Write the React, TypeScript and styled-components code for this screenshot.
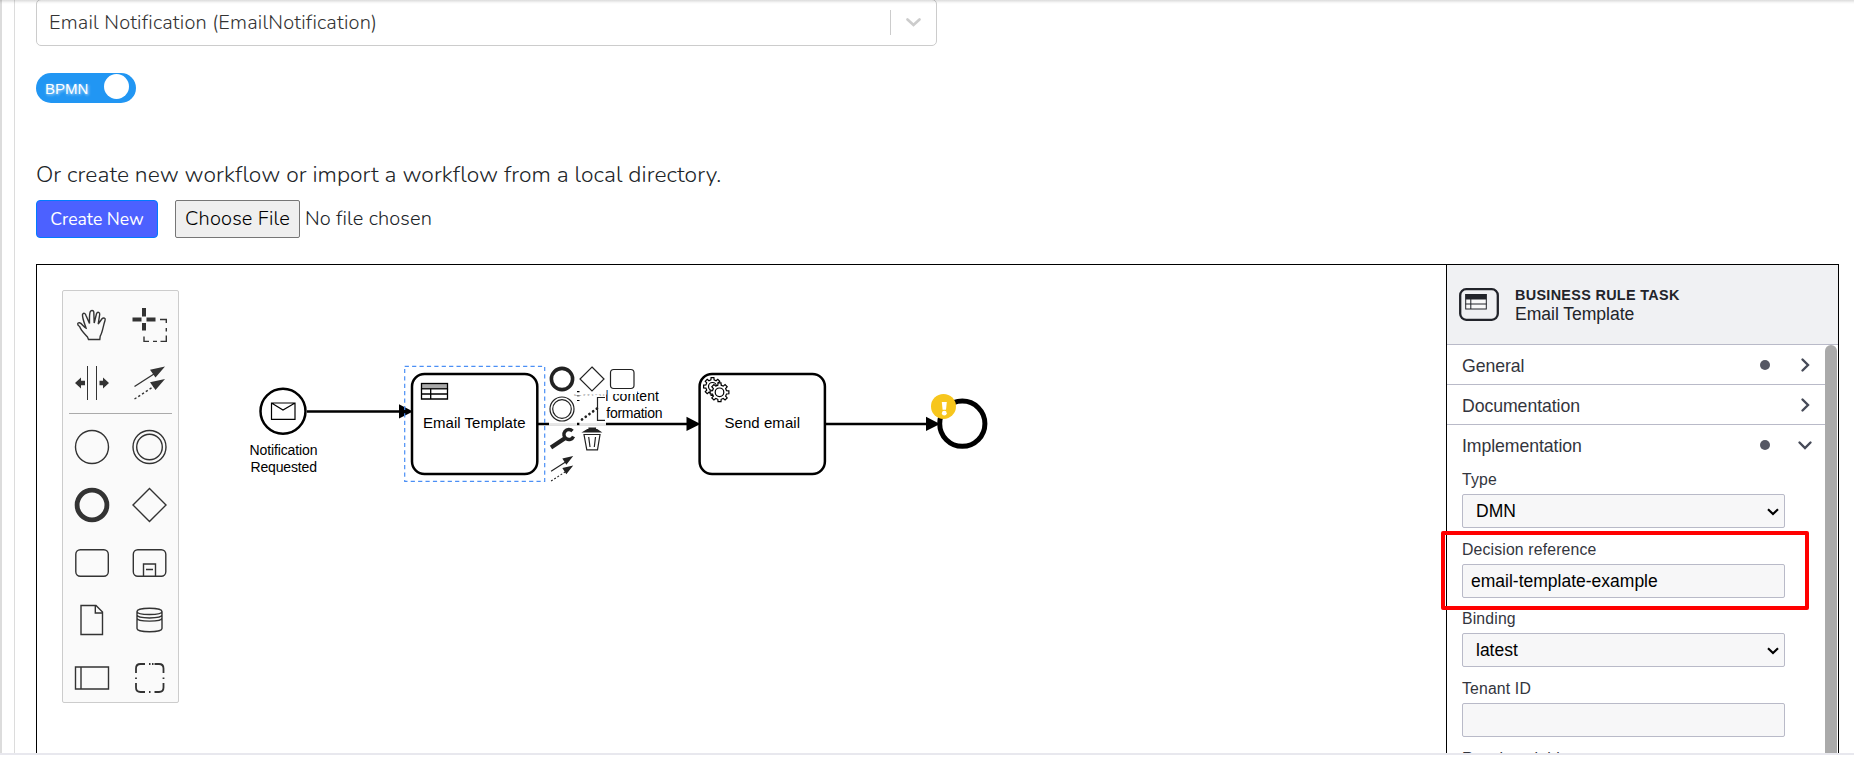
import React from "react";
import styled, { createGlobalStyle } from "styled-components";

const GlobalStyle = createGlobalStyle`
  *, *::before, *::after { box-sizing: border-box; }
  html, body { margin: 0; padding: 0; background: #fff; overflow: hidden; }
`;

const rounded = `"Nunito", "Open Sans", "Noto Sans", sans-serif`;
const plain = `"Liberation Sans", Arial, sans-serif`;

const Page = styled.div`
  position: relative;
  display: flex;
  flex-direction: column;
  width: 1854px;
  height: 759px;
  overflow: hidden;
  background: #fff;
  font-family: ${rounded};
`;

const TopShadow = styled.div`
  position: absolute;
  inset: 0 0 auto 0;
  height: 4px;
  background: linear-gradient(rgba(0, 0, 0, 0.14), rgba(0, 0, 0, 0.04) 60%, rgba(0, 0, 0, 0));
`;

const Frame = styled.div`
  display: flex;
  height: 753px;
  overflow: hidden;
`;

const OuterRail = styled.div`
  flex: none;
  width: 15px;
  border-left: 2px solid #dcdcdc;
  border-right: 1px solid #dcdcdc;
`;

const Content = styled.main`
  display: flex;
  flex-direction: column;
  align-items: flex-start;
  padding-left: 21px;
`;

const FooterLine = styled.div`
  flex: none;
  height: 2px;
  background: #e8e8ee;
`;

const WorkflowSelect = styled.div`
  display: flex;
  align-items: center;
  flex: none;
  width: 901px;
  height: 47px;
  margin-top: -1px;
  padding-left: 12px;
  border: 1px solid #ccc;
  border-radius: 5px;
  color: #333;
`;

const SelectValue = styled.span`
  flex: 1;
  font-size: 20px;
  font-weight: 300;
  line-height: 24px;
  letter-spacing: 0.19px;
  white-space: nowrap;
`;

const SelectDivider = styled.span`
  width: 1px;
  height: 25px;
  margin-right: 14px;
  background: #ccc;
`;

const SelectArrow = styled.svg`
  width: 17px;
  height: 11px;
  margin-right: 14px;
`;

const Toggle = styled.div`
  display: flex;
  align-items: flex-start;
  justify-content: space-between;
  flex: none;
  width: 100px;
  height: 30px;
  margin-top: 27px;
  padding: 1px 7px 0 9px;
  border-radius: 15px;
  background: #2196f3;
`;

const ToggleLabel = styled.span`
  color: #fff;
  font-family: ${plain};
  font-size: 15px;
  line-height: 30px;
  text-shadow: 1px 1px 3px rgba(255, 255, 255, 0.7);
`;

const ToggleKnob = styled.span`
  width: 25px;
  height: 25px;
  border-radius: 50%;
  background: #fff;
`;

const Hint = styled.p`
  margin: 57px 0 0;
  color: #212529;
  font-size: 22.8px;
  font-weight: 300;
  line-height: 30px;
  letter-spacing: 0.07px;
  white-space: nowrap;
`;

const Actions = styled.div`
  display: flex;
  align-items: center;
  height: 38px;
  margin-top: 10px;
  font-size: 18px;
`;

const CreateButton = styled.button`
  width: 122px;
  height: 38px;
  padding: 0;
  border: 1px solid #007bff;
  border-radius: 4px;
  background: #4c61ff;
  color: #fff;
  font: 400 17.6px/34px ${rounded};
  white-space: nowrap;
`;

const FileButton = styled.button`
  width: 125px;
  height: 38px;
  margin: 0 5px 0 17px;
  padding: 0;
  border: 1px solid #767676;
  border-radius: 2px;
  background: #efefef;
  color: #000;
  font: 300 20px/34px ${rounded};
  letter-spacing: 0.15px;
  white-space: nowrap;
`;

const FileName = styled.span`
  color: #212529;
  font-size: 20px;
  font-weight: 300;
  line-height: 36px;
  letter-spacing: 0.12px;
  white-space: nowrap;
`;

const Modeler = styled.section`
  position: relative;
  display: flex;
  flex: none;
  width: 1803px;
  height: 600px;
  margin-top: 26px;
  border: 1px solid #000;
`;

const Canvas = styled.div`
  position: relative;
  width: 1409px;
  height: 488px;
`;

const Diagram = styled.svg`
  display: block;
  width: 1409px;
  height: 488px;
  font-family: ${plain};
`;

const Palette = styled.div`
  position: absolute;
  left: 25px;
  top: 25px;
  width: 117px;
  height: 413px;
  border: 1px solid #ccc;
  border-radius: 2px;
  background: #fafafa;
`;

const PaletteGroup = styled.div<{ $first?: boolean }>`
  display: grid;
  grid-template-columns: 57.5px 57.5px;
  grid-auto-rows: 57.7px;
  place-items: center;
  padding-top: ${(p) => (p.$first ? 5 : 0)}px;
`;

const PaletteDivider = styled.hr`
  height: 1px;
  margin: 2px 6px 4px;
  border: 0;
  background: #aaa;
`;

const PaletteIcon = styled.svg`
  width: 38px;
  height: 38px;
  fill: none;
  stroke: #333;
  stroke-width: 1.4;
`;

const Properties = styled.aside`
  display: flex;
  flex-direction: column;
  width: 392px;
  height: 488px;
  overflow: hidden;
  border-left: 1px solid #000;
  background: #fff;
  font-family: ${plain};
`;

const PanelHeader = styled.header`
  display: flex;
  flex: none;
  height: 80px;
  padding: 23px 0 0 12px;
  gap: 16px;
  border-bottom: 1px solid #b9bac8;
  background: #f0f1f3;
  color: #22242a;
`;

const PanelIcon = styled.svg`
  width: 40px;
  height: 33px;
`;

const PanelKind = styled.div`
  margin-top: -3px;
  font-size: 14.4px;
  font-weight: 700;
  line-height: 20px;
  letter-spacing: 0.32px;
  white-space: nowrap;
`;

const PanelName = styled.div`
  font-size: 17.6px;
  line-height: 19px;
  letter-spacing: -0.05px;
`;

const PanelBody = styled.div`
  display: flex;
  flex: 1;
  min-height: 0;
  padding-right: 1px;
`;

const Groups = styled.div`
  flex: 1;
  overflow: hidden;
`;

const Scrollbar = styled.div`
  width: 12px;
  height: 420px;
  border-radius: 6px 6px 0 0;
  background: #aaa;
`;

const GroupRow = styled.div<{ $open?: boolean }>`
  display: flex;
  align-items: center;
  height: 40px;
  padding: 0 12px 0 15px;
  border-bottom: 1px solid ${(p) => (p.$open ? "transparent" : "#b9bac8")};
  color: #33353d;
  font-size: 17.7px;
  letter-spacing: -0.08px;
`;

const GroupTitle = styled.span`
  flex: 1;
  line-height: 38px;
  padding-top: 2px;
`;

const Dot = styled.span`
  width: 10px;
  height: 10px;
  margin-right: 27px;
  border-radius: 50%;
  background: #555763;
`;

const Chevron = styled.svg<{ $down?: boolean }>`
  width: 16px;
  height: 16px;
  fill: none;
  stroke: #464a58;
  stroke-width: 2.4;
  stroke-linecap: round;
  transform: rotate(${(p) => (p.$down ? 90 : 0)}deg);
`;

const Fields = styled.div`
  display: flex;
  flex-direction: column;
  gap: 14.7px;
  padding: 8px 40px 0 15px;
`;

const Field = styled.div`
  display: flex;
  flex-direction: column;
`;

const Label = styled.label`
  height: 21px;
  color: #33353d;
  font-size: 15.8px;
  line-height: 14px;
  white-space: nowrap;
  letter-spacing: 0.15px;
`;

const Box = styled.div<{ $select?: boolean }>`
  display: flex;
  align-items: center;
  justify-content: space-between;
  height: 34px;
  padding: 0 5px 0 ${(p) => (p.$select ? 13 : 8)}px;
  border: 1px solid #b9bac8;
  border-radius: 2px;
  background: #f7f7f8;
  color: #000;
  font-size: 17.5px;
  line-height: 32px;
`;

const Caret = styled.svg`
  width: 12px;
  height: 8px;
  margin-top: 2px;
  fill: none;
  stroke: #000;
  stroke-width: 2.1;
`;

const Highlight = styled.div`
  position: absolute;
  left: 1404px;
  top: 266px;
  width: 368px;
  height: 79px;
  border: 4px solid #ff0000;
  border-radius: 2px;
`;

const gearPath = (cx: number, cy: number, inner: number, outer: number, teeth = 8) => {
  const pts: string[] = [];
  const step = (Math.PI * 2) / teeth;
  for (let i = 0; i < teeth; i++) {
    const a = i * step - Math.PI / 2;
    [
      [inner, -0.3],
      [outer, -0.2],
      [outer, 0.2],
      [inner, 0.3],
    ].forEach(([r, f]) => {
      pts.push(`${(cx + r * Math.cos(a + f * step)).toFixed(2)} ${(cy + r * Math.sin(a + f * step)).toFixed(2)}`);
    });
  }
  return `M${pts.join("L")}Z`;
};

const tools = [
  <path d="M15.5 33.5L14.500 31C11 27 8 24.500 6.600 20.500C4.200 19 4 16.500 6.500 16.800C9 17.200 10.500 21 13 22C11.500 17.500 9.200 12 9.500 8.500C10.500 6.200 12.500 7.500 13 9.500L16.500 17.500C16.500 13 16.200 8.500 17.200 5.800C18 4 20.400 4.200 20.800 6L21.200 17L23.500 7.800C24.500 5.200 27 6.200 26.700 8.500L25.200 18L29 12.800C30.500 11.200 33 12.200 32 14.500C30 20.500 29.500 26.500 27.200 30.200L26.800 33.500Z" />,
  <>
    <path d="M2.500 13.500H11.500M16.500 13.500H25.500M14 2V10.500M14 17V24.500" strokeWidth="4" />
    <path d="M30 13.500H36.300V17M36.300 22V25.500M36.300 29.500V35.400H30.500M27 35.400H23M19 35.400H14V30.500" />
  </>,
  <>
    <path d="M14.500 2V36M23.500 2V36" strokeWidth="1" />
    <path d="M2 19L8 13.500V16.800H12V21.200H8V24.500ZM36 19L30 13.500V16.800H26.500V21.200H30V24.500Z" fill="#333" stroke="none" />
  </>,
  <>
    <path d="M4.500 22.500L25.500 9" />
    <path d="M4.500 35L24.500 22" strokeDasharray="2.300 2.200" />
    <path d="M35 2.500L20 5.800L25.500 13.500ZM35 15L20 18.300L25.500 26Z" fill="#333" stroke="none" />
  </>,
];

const shapes = [
  <circle cx="19" cy="19" r="16.500" />,
  <>
    <circle cx="19.500" cy="19" r="16.500" />
    <circle cx="19.500" cy="19" r="12.800" />
  </>,
  <circle cx="19" cy="19" r="14.900" strokeWidth="4.800" />,
  <path d="M19.500 2.500L36 19L19.500 35.500L3 19Z" />,
  <rect x="2.800" y="5.800" width="32.500" height="26.500" rx="4.500" />,
  <>
    <rect x="3.300" y="5.800" width="32.500" height="26.500" rx="4.500" />
    <path d="M13.500 32V20H25.500V32M16 25.500H23" />
  </>,
  <path d="M8 4.500H23L29.500 11V33.500H8ZM22.300 4.500V12H29.500" />,
  <path d="M7 10.500C7 6.200 32 6.200 32 10.500V27.500C32 31.800 7 31.800 7 27.500ZM7 10.500C7 14.500 32 14.500 32 10.500M7 13.800C7 18 32 18 32 13.800M7 17C7 21.200 32 21.200 32 17" />,
  <path d="M2.500 8H35.500V30H2.500ZM8 8V30" />,
  <>
    <path d="M6 14V9.500Q6 5 10.500 5H15M24.500 5H29Q33.500 5 33.500 9.500V14M33.500 24V28.500Q33.500 33 29 33H24.500M15 33H10.500Q6 33 6 28.500V24" strokeWidth="1.800" />
    <path d="M19 5H20.500M22 5H23.500M19 33H20.500M33.500 18.500V20M6 18.500V20" strokeWidth="1.800" />
  </>,
];

const Process = () => (
  <Diagram viewBox="37 265 1409 488">
    <g fill="none" stroke="#000" strokeWidth="2.500">
      <circle cx="283" cy="411.300" r="22.500" />
      <path d="M271.500 403H295V419.300H271.500ZM271.500 403L283 410L295 403" strokeWidth="1.200" />
      <path d="M307 411.400H405M538 423.900H692M826 423.900H932" />
      <rect x="412" y="374" width="125.300" height="100" rx="12.500" fill="#fff" />
      <rect x="699.600" y="374" width="125.300" height="100" rx="12.500" fill="#fff" />
      <circle cx="962.300" cy="423.700" r="22.600" strokeWidth="5" />
      <g strokeWidth="1.300">
        <rect x="421.500" y="383.500" width="26" height="5.300" fill="#aaa" />
        <path d="M421.500 388.800V399H447.500V388.800M421.500 394H447.500M430.700 388.800V399" />
      </g>
      <g strokeWidth="1.200" fill="#fff">
        <path d={gearPath(712.5, 386.5, 6.8, 9)} />
        <circle cx="712.500" cy="386.500" r="4" />
        <path d={gearPath(719.5, 392.3, 7.2, 9.5)} />
        <circle cx="719.500" cy="392.300" r="4.300" />
      </g>
    </g>
    <path d="M413 411.400L399 404.200V418.600ZM700.500 423.900L686.500 416.700V431.100ZM940 423.900L926 416.700V431.100Z" />
    <rect x="404.700" y="366.300" width="140" height="115" fill="none" stroke="#4b8ff5" strokeWidth="1.200" strokeDasharray="4.200 3.200" />
    <g fontSize="15" fill="#000">
      <text x="423" y="428" textLength="102.500">Email Template</text>
      <text x="724.500" y="428" textLength="75.500">Send email</text>
    </g>
    <g fontSize="14" fill="#000">
      <text x="249.500" y="455" textLength="68">Notification</text>
      <text x="250.500" y="472" textLength="66.500">Requested</text>
      <text x="573" y="401" textLength="86">Email content</text>
      <text x="596" y="418" textLength="66.500">information</text>
    </g>
    <path d="M549 366H577V394.500H549ZM579.500 366H606.500V394.500H579.500ZM609.500 366H637V394H609.500ZM549 395.500H577V425.500H549ZM579.500 395.500H606V425.500H579.500ZM549 426H577V482H549ZM579.500 426H606.500V454H579.500Z" fill="#fff" />
    <path d="M549 394H606V396H549Z" fill="#fff" opacity="0.5" />
    <path d="M549 424H577M579.500 424H606" stroke="#ccc" />
    <g fill="none" stroke="#222" strokeWidth="1.200">
      <circle cx="562" cy="379" r="10.600" strokeWidth="3.600" />
      <path d="M592 367L604 379L592 391L580 379Z" />
      <rect x="610.500" y="369.500" width="23.500" height="19" rx="3.200" />
      <circle cx="562" cy="409" r="12" />
      <circle cx="562" cy="409" r="9.300" />
      <path d="M605 397.500H597.500V420.300H605" />
      <path d="M582 419.500L597 408.500" strokeWidth="2.700" strokeLinecap="round" strokeDasharray="0.100 4.500" />
      <path d="M551 447.500L564.500 438.500" strokeWidth="4.200" />
      <path d="M572.500 431A5 5 0 1 0 573.500 436.500" strokeWidth="3.400" />
      <path d="M584 434.500H600L597.500 449.800H586.800ZM588.700 437L590 447M595.500 437L594.300 447" />
      <path d="M583.500 432L587.500 429.500H589V428H595.500V429.500H597L600.500 432Z" fill="#222" />
      <g transform="translate(548.200 447.700) scale(.725)" strokeWidth="1.500">
        <path d="M4 32.500L25 19" />
        <path d="M4 46L24 33" strokeDasharray="2.600 2.600" />
        <path d="M34.500 11.500L19.500 15L25 23.500ZM34.500 24.500L19.500 28L25 36.500Z" fill="#222" stroke="none" />
      </g>
    </g>
    <circle cx="943.500" cy="406.400" r="12.500" fill="#f7c61d" />
    <path d="M941.800 402H946.800L946 409.800H942.600Z" fill="#fff" />
    <circle cx="944.300" cy="413.200" r="2.400" fill="#fff" />
  </Diagram>
);

const Arrow = ({ down }: { down?: boolean }) => (
  <Chevron viewBox="0 0 16 16" $down={down}>
    <path d="M5.500 2.500L11 8L5.500 13.500" />
  </Chevron>
);

const fields = [
  { label: "Type", value: "DMN", select: true },
  { label: "Decision reference", value: "email-template-example" },
  { label: "Binding", value: "latest", select: true },
  { label: "Tenant ID", value: "" },
  { label: "Result variable", value: "" },
];

export default function App() {
  return (
    <Page>
      <GlobalStyle />
      <Frame>
        <OuterRail />
        <Content>
          <WorkflowSelect>
            <SelectValue>Email Notification (EmailNotification)</SelectValue>
            <SelectDivider />
            <SelectArrow viewBox="0 0 17 11">
              <path d="M2.500 2.500L8.500 8L14.500 2.500" fill="none" stroke="#ccc" strokeWidth="2.700" strokeLinecap="round" />
            </SelectArrow>
          </WorkflowSelect>
          <Toggle>
            <ToggleLabel>BPMN</ToggleLabel>
            <ToggleKnob />
          </Toggle>
          <Hint>Or create new workflow or import a workflow from a local directory.</Hint>
          <Actions>
            <CreateButton>Create New</CreateButton>
            <FileButton>Choose File</FileButton>
            <FileName>No file chosen</FileName>
          </Actions>
          <Modeler>
            <Canvas>
              <Process />
              <Palette>
                <PaletteGroup $first>
                  {tools.map((icon, i) => (
                    <PaletteIcon key={i} viewBox="0 0 38 38">{icon}</PaletteIcon>
                  ))}
                </PaletteGroup>
                <PaletteDivider />
                <PaletteGroup>
                  {shapes.map((icon, i) => (
                    <PaletteIcon key={i} viewBox="0 0 38 38">{icon}</PaletteIcon>
                  ))}
                </PaletteGroup>
              </Palette>
            </Canvas>
            <Properties>
              <PanelHeader>
                <PanelIcon viewBox="0 0 40 33">
                  <rect x="1.200" y="1.200" width="37.600" height="30.600" rx="6" fill="none" stroke="#22242a" strokeWidth="2.300" />
                  <rect x="6.700" y="6.500" width="20.600" height="14.500" fill="#fafafa" stroke="#22242a" />
                  <path d="M6.500 6H27.500V11.500H6.500Z" fill="#22242a" />
                  <path d="M6.500 16H27.500M11.800 11V21" stroke="#22242a" />
                </PanelIcon>
                <div>
                  <PanelKind>BUSINESS RULE TASK</PanelKind>
                  <PanelName>Email Template</PanelName>
                </div>
              </PanelHeader>
              <PanelBody>
                <Groups>
                  <GroupRow><GroupTitle>General</GroupTitle><Dot /><Arrow /></GroupRow>
                  <GroupRow><GroupTitle>Documentation</GroupTitle><Arrow /></GroupRow>
                  <GroupRow $open><GroupTitle>Implementation</GroupTitle><Dot /><Arrow down /></GroupRow>
                  <Fields>
                    {fields.map((f) => (
                      <Field key={f.label}>
                        <Label>{f.label}</Label>
                        <Box $select={f.select}>
                          {f.value}
                          {f.select && (
                            <Caret viewBox="0 0 12 8"><path d="M1 1.200L6 6L11 1.200" /></Caret>
                          )}
                        </Box>
                      </Field>
                    ))}
                  </Fields>
                </Groups>
                <Scrollbar />
              </PanelBody>
            </Properties>
            <Highlight />
          </Modeler>
        </Content>
      </Frame>
      <FooterLine />
      <TopShadow />
    </Page>
  );
}
